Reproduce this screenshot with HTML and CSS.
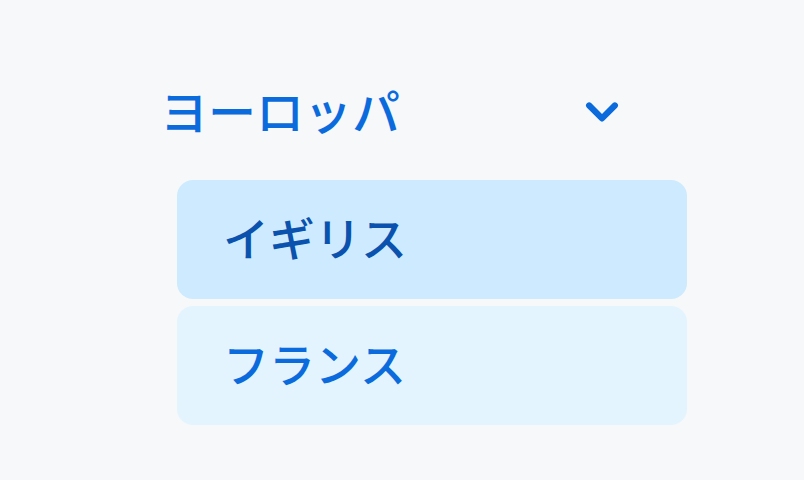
FILE: index.html
```html
<!doctype html>
<html>
    <head>
        <meta charset="UTF-8" />
        <title>地域</title>
        <link rel="stylesheet" href="styles.css">
    </head>
    <body>
        <div class="group">
            <div class="group-header">
                <span class="group-title">ヨーロッパ</span>
                <!-- Chevron -->
                <svg class="chevron" viewBox="0 0 24 24">
                    <path d="M5 9l7 7 7-7" />
                </svg>
            </div>
            <div class="items">
                <div class="item selected">イギリス</div>
                <div class="item">フランス</div>
            </div>
        </div>
    </body>
</html>
```

FILE: styles.css
```css
body {
    font-family: "Noto Sans CJK JP", "Noto Sans", sans-serif;
    margin: 0;
    padding: 0;
    background-color: #f6f8fa;
    width: 804px;
    height: 480px;
    overflow: hidden;
}

.group {
    padding: 77px 0 0 160px;
    width: 527px;
}

.group-header {
    display: flex;
    align-items: center;
    justify-content: space-between;
    height: 64px;
    padding-right: 63px;
    margin-bottom: 39px;
}

.group-title {
    font-size: 48px;
    font-weight: 500;
    color: #0b6bdc;
}

.chevron {
    width: 44px;
    height: 44px;
    margin-bottom: -4px;
    fill: none;
    stroke: #0b6bdc;
    stroke-width: 3.4;
    stroke-linecap: round;
    stroke-linejoin: round;
}

.items {
    display: flex;
    flex-direction: column;
    gap: 7px;
    margin-left: 17px;
}

.item {
    height: 119px;
    box-sizing: border-box;
    padding: 0 0 8px 46px;
    border-radius: 16px;
    background-color: #e3f4fe;
    color: #0b6bdc;
    font-size: 46px;
    font-weight: 500;
    display: flex;
    align-items: center;
}

.item.selected {
    background-color: #cdeafe;
    color: #0a52ad;
}
```
